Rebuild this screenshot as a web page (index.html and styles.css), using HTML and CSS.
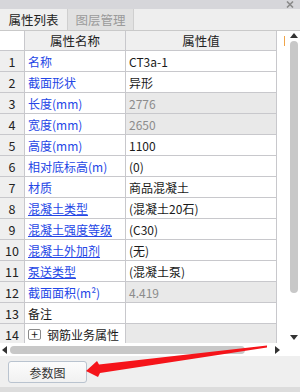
FILE: index.html
```
<!DOCTYPE html>
<html>
<head>
  <meta charset="utf-8">
  <title>属性列表</title>
  <link rel="stylesheet" href="styles.css">
</head>
<body>
  <div class="panel">
    <div class="titlebar">
      <svg class="close" width="8" height="7" viewBox="0 0 8 7"><path d="M1 0.5 L7 6.5 M7 0.5 L1 6.5" stroke="#8a8a8a" stroke-width="1.6"/></svg>
    </div>

    <div class="tabs">
      <div class="tab active">属性列表</div>
      <div class="tab">图层管理</div>
    </div>

    <div class="view">
      <div class="grid">
        <div class="cell corner"></div>
        <div class="cell head">属性名称</div>
        <div class="cell head">属性值</div>

        <div class="cell num">1</div><div class="cell name blue">名称</div><div class="cell val">CT3a-1</div>
        <div class="cell num">2</div><div class="cell name blue">截面形状</div><div class="cell val">异形</div>
        <div class="cell num">3</div><div class="cell name blue">长度(mm)</div><div class="cell val off">2776</div>
        <div class="cell num">4</div><div class="cell name blue">宽度(mm)</div><div class="cell val off">2650</div>
        <div class="cell num">5</div><div class="cell name blue">高度(mm)</div><div class="cell val">1100</div>
        <div class="cell num">6</div><div class="cell name blue">相对底标高(m)</div><div class="cell val">(0)</div>
        <div class="cell num">7</div><div class="cell name blue">材质</div><div class="cell val">商品混凝土</div>
        <div class="cell num">8</div><div class="cell name blue link">混凝土类型</div><div class="cell val">(混凝土20石)</div>
        <div class="cell num">9</div><div class="cell name blue link">混凝土强度等级</div><div class="cell val">(C30)</div>
        <div class="cell num">10</div><div class="cell name blue link">混凝土外加剂</div><div class="cell val">(无)</div>
        <div class="cell num">11</div><div class="cell name blue link">泵送类型</div><div class="cell val">(混凝土泵)</div>
        <div class="cell num">12</div><div class="cell name blue">截面面积(m²)</div><div class="cell val off">4.419</div>
        <div class="cell num">13</div><div class="cell name">备注</div><div class="cell val"></div>
        <div class="cell num">14</div><div class="cell name"><span class="plus">+</span>钢筋业务属性</div><div class="cell val grey"></div>
      </div>

      <div class="vscroll">
        <span class="arrow up"></span>
        <span class="vthumb"></span>
        <span class="arrow down"></span>
      </div>
      <span class="mark"></span>
    </div>

    <div class="hscroll">
      <span class="arrow left"></span>
      <span class="hthumb"></span>
      <span class="arrow right"></span>
    </div>

    <div class="footer">
      <button class="btn">参数图</button>
    </div>
    <div class="bottom"></div>

    <!-- red pointer drawn over the screenshot -->
    <svg class="pointer" width="300" height="392" viewBox="0 0 300 392">
      <polygon points="86,371 97,361 99,364.5 267,345.5 267,347.5 100,373 98,377" fill="#f5141a"/>
    </svg>
  </div>
</body>
</html>
```

FILE: styles.css
```
* {
  box-sizing: border-box;
}

body {
  margin: 0;
  background-color: #efefef;
  font-family: "Noto Sans CJK SC", "Microsoft YaHei", sans-serif;
  font-size: 12px;
  color: #1a1a1a;
}

.panel {
  position: relative;
  width: 300px;
  height: 392px;
  overflow: hidden;
}

.titlebar {
  height: 9px;
  background-color: #d6d6da;
  display: flex;
  justify-content: flex-end;
  align-items: center;
  padding-right: 6px;
}

.tabs {
  height: 22px;
  display: flex;
  background-color: #eeeeee;
  border-bottom: 1px solid #c9c9c9;
}

.tab {
  width: 66px;
  display: flex;
  align-items: center;
  justify-content: center;
  background-color: #e1e1e1;
  color: #9a9a9a;
  border-right: 1px solid #cfcfcf;
  font-size: 12.5px;
}

.tab.active {
  width: 68px;
  background-color: #efefef;
  color: #222222;
}

/* property grid */

.view {
  position: relative;
  display: flex;
  height: 312px;
  background-color: #ffffff;
}

.grid {
  width: 277px;
  display: grid;
  grid-template-columns: 25px 101px 151px;
  grid-template-rows: 20px;
  grid-auto-rows: 21px;
  overflow: hidden;
}

.cell {
  border-right: 1px solid #c8c8cc;
  border-bottom: 1px solid #c8c8cc;
  display: flex;
  align-items: center;
  white-space: nowrap;
  overflow: hidden;
  padding-left: 3px;
}

.corner {
  background-color: #ffffff;
}

.head {
  background-color: #efefef;
  justify-content: center;
  padding-left: 0;
  font-size: 12.5px;
  color: #222222;
}

.num {
  background-color: #efefef;
  justify-content: center;
  padding-left: 0;
  font-size: 12.5px;
  color: #222222;
}

.blue {
  color: #2446e6;
}

.link {
  text-decoration: underline;
}

.val.off {
  background-color: #e9e9e9;
  color: #8c8c8c;
}

.val.grey {
  background-color: #e9e9e9;
}

.plus {
  display: inline-flex;
  align-items: center;
  justify-content: center;
  width: 13px;
  height: 11px;
  border: 1px solid #8a8a8a;
  border-radius: 2px;
  margin-right: 6px;
  font-size: 12px;
  line-height: 1;
  background-color: #ffffff;
}

/* scrollbars */

.vscroll {
  width: 23px;
  position: relative;
  display: flex;
  flex-direction: column;
  align-items: center;
  padding-left: 10px;
}

.vthumb {
  width: 8px;
  height: 252px;
  margin-top: 3px;
  border-radius: 4px;
  background-color: #c8c8c8;
}

.arrow {
  width: 0;
  height: 0;
  border: 4px solid transparent;
}

.arrow.up {
  margin-top: 2px;
  border-bottom: 5px solid #333333;
  border-top-width: 0;
}

.arrow.down {
  margin-top: auto;
  margin-bottom: 3px;
  border-top: 5px solid #333333;
  border-bottom-width: 0;
}

.mark {
  position: absolute;
  left: 284px;
  top: 5px;
  width: 1px;
  height: 10px;
  background-color: #f0a448;
}

.hscroll {
  height: 13px;
  background-color: #ffffff;
  display: flex;
  align-items: center;
  padding-left: 2px;
}

.hthumb {
  width: 235px;
  height: 8px;
  margin-left: 3px;
  border-radius: 4px;
  background-color: #c8c8c8;
}

.arrow.left {
  border-right: 5px solid #333333;
  border-left-width: 0;
}

.arrow.right {
  margin-left: 30px;
  border-left: 5px solid #333333;
  border-right-width: 0;
}

/* bottom area */

.footer {
  height: 31px;
  padding: 5px 0 0 8px;
  background-color: #efefef;
}

.btn {
  width: 79px;
  height: 22px;
  border: 1px solid #b9c3cf;
  border-radius: 3px;
  background: linear-gradient(#fcfcfc, #f1f1f1);
  font-family: "Noto Sans CJK SC", "Microsoft YaHei", sans-serif;
  font-size: 12px;
  color: #333333;
  padding: 0;
}

.bottom {
  height: 6px;
  background-color: #dcdcdc;
}

.pointer {
  position: absolute;
  left: 0;
  top: 0;
}
```
